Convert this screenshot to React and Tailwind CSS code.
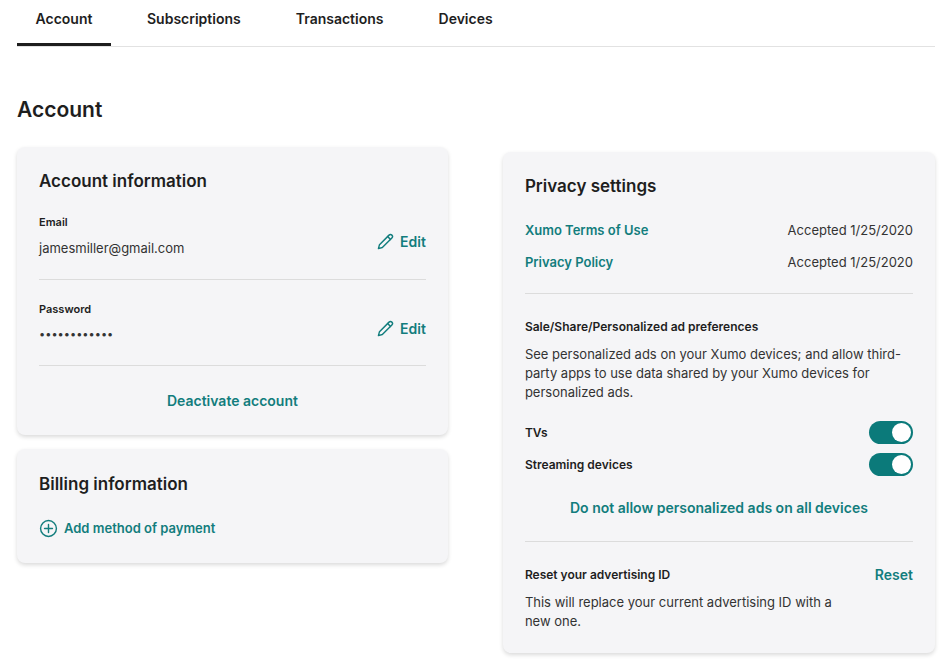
import React from 'react';

const teal = 'text-[#127d7d]';

const Pencil = () => (
  <svg width="17" height="17" viewBox="0 0 24 24" fill="none" stroke="currentColor" strokeWidth="2" strokeLinecap="round" strokeLinejoin="round">
    <path d="M17 3a2.8 2.8 0 0 1 4 4L7.5 20.5 2 22l1.5-5.5Z" />
    <path d="m15 5 4 4" />
  </svg>
);

const Toggle = () => (
  <div className="w-[44px] h-[23px] rounded-full bg-[#0b7a7a] flex items-center justify-end pr-[2px]">
    <div className="w-[19px] h-[19px] rounded-full bg-white" />
  </div>
);

const Card = ({ className = '', children }) => (
  <div className={`bg-[#f5f5f7] rounded-lg shadow-[0_2px_4px_rgba(0,0,0,0.15)] px-[22px] ${className}`}>{children}</div>
);

export default function App() {
  const tabs = ['Account', 'Subscriptions', 'Transactions', 'Devices'];
  return (
    <div className="w-[952px] h-[661px] bg-white text-[#1e1e1e] overflow-hidden" style={{ fontFamily: 'Inter, "Noto Sans", sans-serif' }}>
      <div className="mx-[17px] flex border-b border-[#e2e2e2] h-[47px]">
        {tabs.map((t, i) => (
          <div key={t} className={`h-full flex items-start pt-[8px] justify-center text-[14px] font-semibold ${i === 0 ? 'w-[94px] border-b-[3px] border-[#1e1e1e]' : i === 1 ? 'ml-[36px] mr-[55px]' : i === 2 ? 'mr-[55px]' : ''}`}>{t}</div>
        ))}
      </div>
      <h1 className="ml-[17px] mt-[49px] text-[21px] font-semibold leading-[28px]">Account</h1>
      <div className="flex mx-[17px] mt-[23px] gap-[55px] items-start">
        <div className="w-[433px] flex flex-col gap-[14px]">
          <Card className="pt-[23px] pb-[24px]">
            <h2 className="text-[17px] font-semibold leading-[22px]">Account information</h2>
            <div className="flex items-center justify-between mt-[22px] pb-[22px] border-b border-[#dcdcdc]">
              <div>
                <div className="text-[11px] font-semibold leading-[16px]">Email</div>
                <div className="text-[13px] text-[#333] mt-[9px] leading-[18px]">jamesmiller@gmail.com</div>
              </div>
              <div className={`flex items-center gap-[6px] ${teal} text-[14px] font-semibold mt-[12px]`}><Pencil />Edit</div>
            </div>
            <div className="flex items-center justify-between mt-[21px] pb-[22px] border-b border-[#dcdcdc]">
              <div>
                <div className="text-[11px] font-semibold leading-[16px]">Password</div>
                <div className="text-[11px] text-[#333] mt-[8px] leading-[18px]">••••••••••••</div>
              </div>
              <div className={`flex items-center gap-[6px] ${teal} text-[14px] font-semibold mt-[12px]`}><Pencil />Edit</div>
            </div>
            <div className={`text-center mt-[24px] text-[14px] font-semibold ${teal}`}>Deactivate account</div>
          </Card>
          <Card className="pt-[24px] pb-[24px]">
            <h2 className="text-[17px] font-semibold leading-[22px]">Billing information</h2>
            <div className={`flex items-center gap-[6px] mt-[24px] text-[13px] font-semibold ${teal}`}>
              <svg width="19" height="19" viewBox="0 0 24 24" fill="none" stroke="currentColor" strokeWidth="1.8" strokeLinecap="round"><circle cx="12" cy="12" r="10" /><path d="M12 7v10M7 12h10" /></svg>
              Add method of payment
            </div>
          </Card>
        </div>
        <Card className="w-[434px] mt-[5px] pt-[23px] pb-[22px]">
          <h2 className="text-[17px] font-semibold leading-[22px]">Privacy settings</h2>
          <div className="flex justify-between mt-[24px] text-[13px] leading-[18px]">
            <span className={`font-semibold ${teal}`}>Xumo Terms of Use</span><span className="text-[#333]">Accepted 1/25/2020</span>
          </div>
          <div className="flex justify-between mt-[14px] pb-[22px] border-b border-[#dcdcdc] text-[13px] leading-[18px]">
            <span className={`font-semibold ${teal}`}>Privacy Policy</span><span className="text-[#333]">Accepted 1/25/2020</span>
          </div>
          <div className="mt-[24px] text-[12px] font-semibold leading-[18px]">Sale/Share/Personalized ad preferences</div>
          <p className="mt-[9px] text-[13px] leading-[19px] text-[#333]">See personalized ads on your Xumo devices; and allow third-party apps to use data shared by your Xumo devices for personalized ads.</p>
          <div className="flex justify-between items-center mt-[19px] text-[12px] font-semibold"><span>TVs</span><Toggle /></div>
          <div className="flex justify-between items-center mt-[9px] text-[12px] font-semibold"><span>Streaming devices</span><Toggle /></div>
          <div className={`text-center mt-[21px] pb-[23px] border-b border-[#dcdcdc] text-[14px] font-semibold ${teal}`}>Do not allow personalized ads on all devices</div>
          <div className="flex justify-between items-center mt-[22px]">
            <span className="text-[12px] font-semibold">Reset your advertising ID</span>
            <span className={`text-[14px] font-semibold ${teal}`}>Reset</span>
          </div>
          <p className="mt-[8px] text-[13px] leading-[19px] text-[#333] w-[320px]">This will replace your current advertising ID with a new one.</p>
        </Card>
      </div>
    </div>
  );
}
